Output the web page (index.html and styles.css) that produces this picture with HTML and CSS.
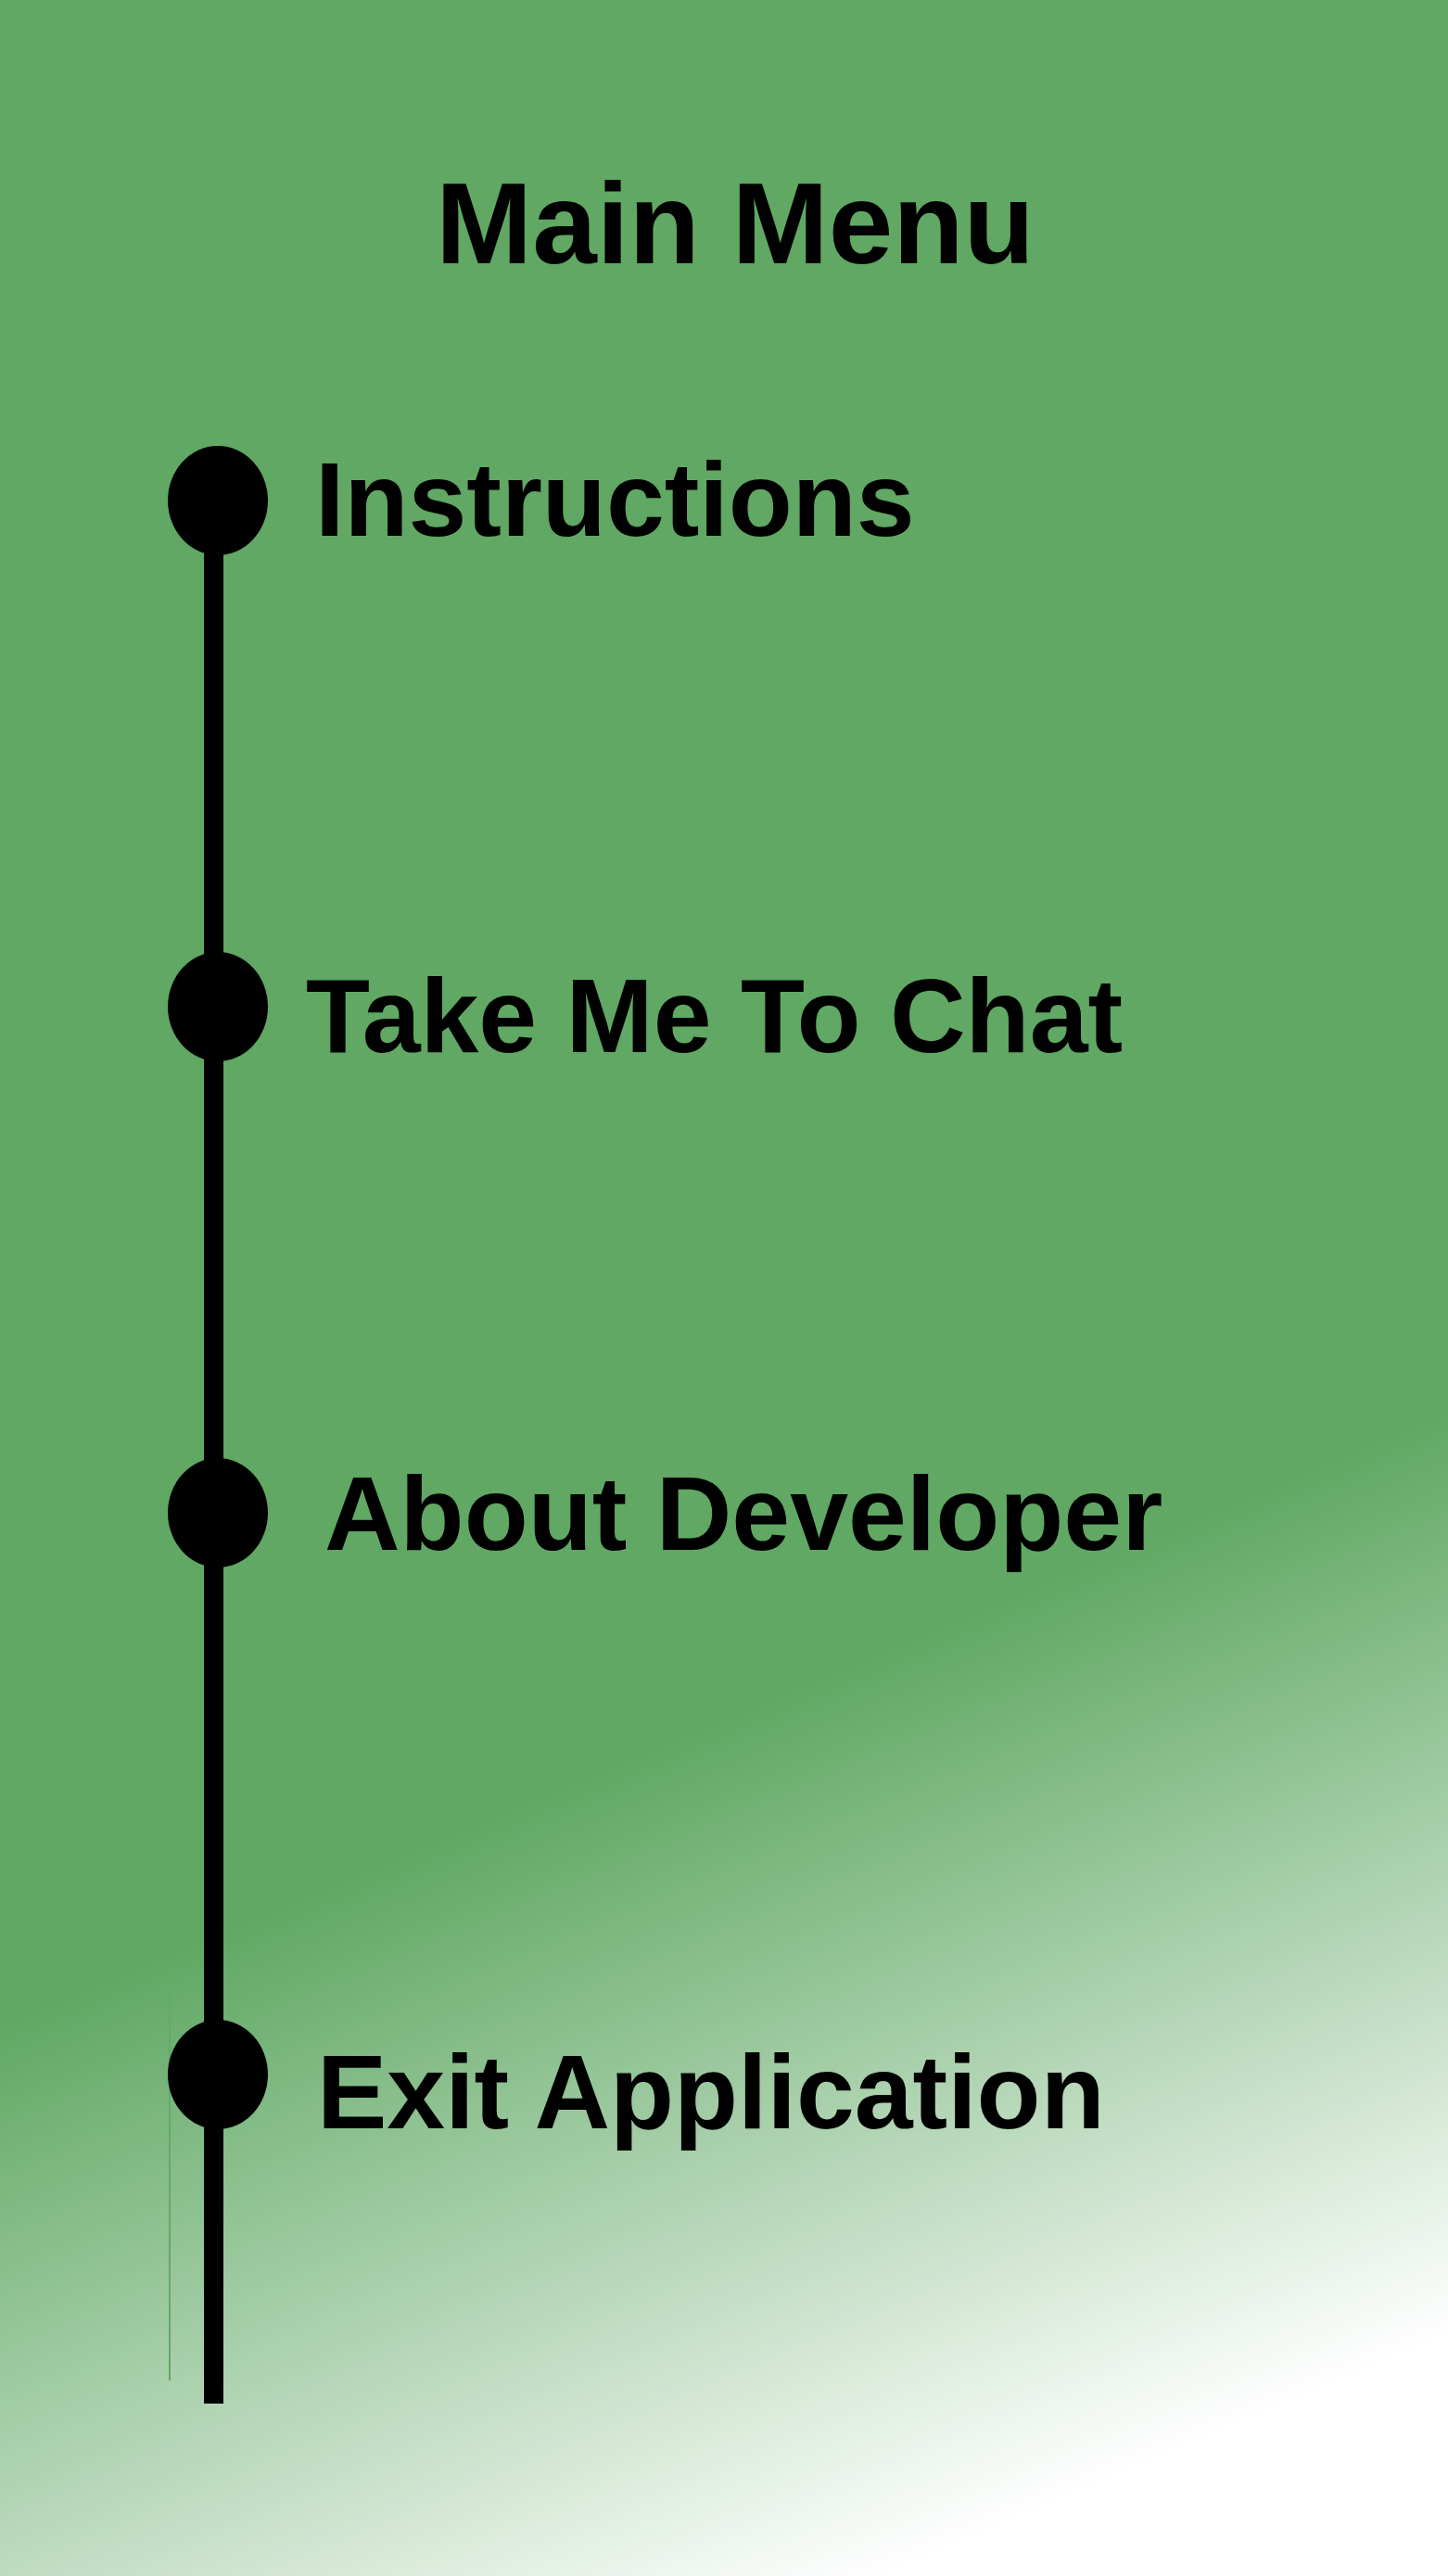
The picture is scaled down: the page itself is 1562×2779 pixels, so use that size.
FILE: index.html
```html
<!DOCTYPE html>
<html lang="en">
<head>
    <meta charset="UTF-8">
    <meta name="viewport" content="width=device-width, initial-scale=1.0">
    <title>Main Menu</title>
    <link rel="stylesheet" href="styles.css">
</head>
<body>
    <div class="screen">
        <h1 class="title">Main Menu</h1>

        <!-- timeline menu -->
        <div class="menu">
            <div class="item">
                <span class="dot"></span>
                <span class="label label-instructions">Instructions</span>
            </div>
            <div class="item">
                <span class="dot"></span>
                <span class="label label-chat">Take Me To Chat</span>
            </div>
            <div class="item">
                <span class="dot"></span>
                <span class="label label-about">About Developer</span>
            </div>
            <div class="item item-last">
                <span class="dot"></span>
                <span class="label label-exit">Exit Application</span>
            </div>
        </div>
    </div>
</body>
</html>
```

FILE: styles.css
```css
body {
    margin: 0;
    font-family: "Liberation Sans", Arial, sans-serif;
    color: #000;
}
.screen {
    height: 2779px;
    overflow: hidden;
    background: linear-gradient(157deg, #60a864 63.5%, #ffffff 92.5%);
}
.title {
    margin: 169px 0 0 0;
    padding-left: 24px;
    text-align: center;
    font-size: 125px;
    font-weight: 700;
    line-height: 1.15;
}
.menu {
    position: relative;
    display: flex;
    flex-direction: column;
    gap: 428px;
    margin: 168px 0 0 181px;
}
.menu::before {
    content: "";
    position: absolute;
    left: 39px;
    top: 59px;
    width: 21px;
    height: 2053px;
    background: #000;
}
.menu::after {
    content: "";
    position: absolute;
    left: 1px;
    top: 1671px;
    width: 2px;
    height: 416px;
    background: #62aa66;
}
.item {
    position: relative;
    z-index: 1;
    display: flex;
    align-items: flex-start;
    height: 118px;
}
.item-last {
    margin-top: 60px;
}
.dot {
    flex: none;
    width: 108px;
    height: 118px;
    border-radius: 50%;
    background: #000;
}
.label {
    font-size: 113px;
    font-weight: 700;
    line-height: 1;
    white-space: nowrap;
    margin: 3px 0 0 51px;
}
.label-instructions {
    margin-top: 2px;
}
.label-chat {
    margin-left: 41px;
    margin-top: 13px;
}
.label-about {
    margin-left: 61px;
    margin-top: 4px;
}
.label-exit {
    margin-left: 53px;
    margin-top: 22px;
}
```
